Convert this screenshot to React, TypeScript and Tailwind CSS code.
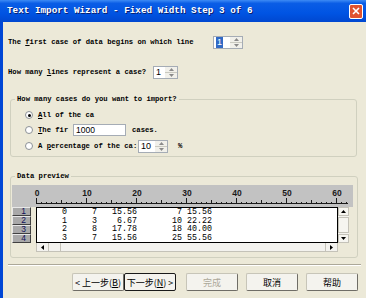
import React from 'react'

const rows = [
    ['0', '7', '15.56', '7', '15.56'],
    ['1', '3', '6.67', '10', '22.22'],
    ['2', '8', '17.78', '18', '40.00'],
    ['3', '7', '15.56', '25', '55.56'],
]

const widths = [6, 6, 8, 9, 6]

const Spinner = ({ value, width, selected }: { value: string; width: string; selected?: boolean }) => {
    return (
        <div className={`flex h-[13px] shrink-0 border border-[#a5acb5] bg-white ${width}`}>
            <div className="flex flex-1 items-center pl-[2px] font-['Liberation_Sans',sans-serif] text-[9px] leading-none font-normal text-black">
                <span className={selected ? 'bg-[#316ac5] px-[1px] py-[1px] text-white' : ''}>{value}</span>
            </div>
            <div className="flex w-[12px] flex-col">
                <div className="flex flex-1 items-center justify-center border-b border-[#c9c9c0] bg-[#f1f0ea]">
                    <svg width="5" height="3" viewBox="0 0 5 3">
                        <path d="M0 3 L2.5 0 L5 3 Z" fill="#8a8a8a" />
                    </svg>
                </div>
                <div className="flex flex-1 items-center justify-center bg-[#f1f0ea]">
                    <svg width="5" height="3" viewBox="0 0 5 3">
                        <path d="M0 0 L2.5 3 L5 0 Z" fill="#8a8a8a" />
                    </svg>
                </div>
            </div>
        </div>
    )
}

const Radio = ({ checked }: { checked?: boolean }) => {
    return (
        <div className="flex h-[8px] w-[8px] shrink-0 items-center justify-center rounded-full border border-[#8c9196] bg-white">
            {checked && <div className="h-[3px] w-[3px] rounded-full bg-black" />}
        </div>
    )
}

const Ruler = () => {
    const ticks = []
    for (let c = 0; c <= 62; c++) {
        const x = 24.5 + c * 5
        const h = c % 10 === 0 ? 5 : c % 5 === 0 ? 3 : 1
        ticks.push(<line key={c} x1={x} x2={x} y1={18 - h} y2={18.5} stroke="#1a1a1a" strokeWidth="1" />)
    }
    const labels = [0, 10, 20, 30, 40, 50, 60]
    return (
        <svg width="341" height="22" viewBox="0 0 341 22">
            <line x1="24" x2="336" y1="18.5" y2="18.5" stroke="#1a1a1a" strokeWidth="1" />
            {ticks}
            {labels.map((c) => (
                <text
                    key={c}
                    x={25 + c * 5}
                    y="11"
                    textAnchor="middle"
                    fontSize="8.5"
                    fontFamily="Liberation Sans, sans-serif"
                    fill="#1a1a1a"
                >
                    {c}
                </text>
            ))}
        </svg>
    )
}

const Button = ({ children, primary, disabled }: { children: React.ReactNode; primary?: boolean; disabled?: boolean }) => {
    return (
        <div
            className={`flex h-[18px] w-[52px] items-center justify-center rounded-[2px] border bg-[#f4f3ee] font-['Noto_Sans_CJK_SC',sans-serif] text-[9px] leading-none ${
                primary ? 'border-[#1a1a1a]' : 'border-[#c7c5b8] border-r-[#6f6d66] border-b-[#6f6d66]'
            } ${disabled ? 'text-[#aca899]' : 'text-black'}`}
        >
            {children}
        </div>
    )
}

export default function App() {
    return (
        <div className="flex h-[298px] w-[366px] flex-col overflow-hidden bg-[#ece9d8]">
            {/* title bar */}
            <div className="flex h-[22px] shrink-0 items-center justify-between bg-[linear-gradient(to_bottom,#3d8bf5_0%,#0a5de6_15%,#0054e3_60%,#0047d0_100%)] pl-[7px] pr-[3px]">
                <span className="font-['Liberation_Mono',monospace] text-[9.3px] font-bold text-white [text-shadow:1px_1px_0_#0a1e6e]">
                    Text Import Wizard - Fixed Width Step 3 of 6
                </span>
                <div className="flex h-[15px] w-[14px] items-center justify-center rounded-[2px] border border-white bg-[#e0522f]">
                    <svg width="8" height="8" viewBox="0 0 8 8">
                        <path d="M1 1 L7 7 M7 1 L1 7" stroke="#fff" strokeWidth="1.6" />
                    </svg>
                </div>
            </div>

            <div className="flex flex-1 border-l-[3px] border-[#0046d5]">
                <div className="flex flex-1 flex-col pl-[5px] font-['Liberation_Mono',monospace] text-[7.2px] font-semibold whitespace-nowrap text-black">
                    {/* line 1 */}
                    <div className="mt-[14px] flex h-[13px] items-center">
                        <span className="w-[205px]">
                            The <span className="underline">f</span>irst case of data begins on which line
                        </span>
                        <Spinner value="1" width="w-[30px]" selected />
                    </div>

                    {/* line 2 */}
                    <div className="mt-[17px] flex h-[12px] items-center">
                        <span className="w-[145px]">
                            How many <span className="underline">l</span>ines represent a case?
                        </span>
                        <Spinner value="1" width="w-[25px]" />
                    </div>

                    {/* group 1 */}
                    <fieldset className="mt-[16px] mr-[9px] ml-[2px] rounded-[3px] border border-[#d0d0bf] pb-[4px]">
                        <legend className="ml-[4px] px-[2px] leading-[10px]">How many cases do you want to import?</legend>
                        <div className="flex flex-col pl-[14px]">
                            <div className="mt-[5px] flex h-[12px] items-center">
                                <Radio checked />
                                <span className="ml-[5px]">
                                    <span className="underline">A</span>ll of the ca
                                </span>
                            </div>
                            <div className="mt-[3px] flex h-[12px] items-center">
                                <Radio />
                                <span className="ml-[5px] w-[35px]">
                                    <span className="underline">T</span>he fir
                                </span>
                                <div className="flex h-[12px] w-[53px] items-center border border-[#a5acb5] bg-white pl-[2px] font-['Liberation_Sans',sans-serif] text-[8.5px] font-normal">
                                    1000
                                </div>
                                <span className="ml-[6px]">cases.</span>
                            </div>
                            <div className="mt-[4px] flex h-[12px] items-center">
                                <Radio />
                                <span className="ml-[5px] w-[100px]">
                                    A <span className="underline">p</span>ercentage of the ca:
                                </span>
                                <Spinner value="10" width="w-[30px]" />
                                <span className="ml-[10px]">%</span>
                            </div>
                        </div>
                    </fieldset>

                    {/* group 2 */}
                    <fieldset className="mt-[14px] mr-[8px] ml-[2px] rounded-[3px] border border-[#d0d0bf] pb-[5px]">
                        <legend className="ml-[4px] px-[2px] leading-[10px]">Data preview</legend>
                        <div className="flex flex-col pl-[1px]">
                            <div className="mt-[4px] w-[341px] bg-[#c2c2c2]">
                                <Ruler />
                            </div>
                            <div className="flex">
                                <div className="flex w-[19px] flex-col">
                                    {rows.map((_, i) => (
                                        <div
                                            key={i}
                                            className="flex h-[9px] items-center justify-end border border-t-[#e8e8e8] border-r-[#404040] border-b-[#404040] border-l-[#e8e8e8] bg-[#a9a9a9] pr-[4px] font-['Liberation_Sans',sans-serif] text-[8.5px] leading-none font-normal text-[#10105a]"
                                        >
                                            {i + 1}
                                        </div>
                                    ))}
                                </div>
                                <div className="ml-[5px] flex flex-col">
                                    <div className="flex">
                                        <div className="h-[36px] w-[302px] border border-black bg-white font-['Liberation_Mono',monospace] text-[8.33px] leading-[8.5px] font-normal whitespace-pre text-black">
                                            {rows.map((r, i) => (
                                                <div key={i}>{r.map((v, j) => v.padStart(widths[j])).join('')}</div>
                                            ))}
                                        </div>
                                        <div className="flex h-[36px] w-[11px] flex-col bg-[#f3f2ee]">
                                            <div className="flex h-[9px] items-center justify-center border border-[#c4c2b8] bg-[#f6f5f0]">
                                                <svg width="5" height="3" viewBox="0 0 5 3">
                                                    <path d="M0 3 L2.5 0 L5 3 Z" fill="#000" />
                                                </svg>
                                            </div>
                                            <div className="mt-[1px] h-[16px] border border-[#c4c2b8] bg-[#f6f5f0]" />
                                            <div className="mt-auto flex h-[9px] items-center justify-center border border-[#c4c2b8] bg-[#f6f5f0]">
                                                <svg width="5" height="3" viewBox="0 0 5 3">
                                                    <path d="M0 0 L2.5 3 L5 0 Z" fill="#000" />
                                                </svg>
                                            </div>
                                        </div>
                                    </div>
                                    <div className="flex h-[9px] w-[302px] border border-t-0 border-[#c4c2b8] bg-[#f3f2ee]">
                                        <div className="flex w-[12px] items-center justify-center border-r border-[#c4c2b8]">
                                            <svg width="3" height="5" viewBox="0 0 3 5">
                                                <path d="M3 0 L0 2.5 L3 5 Z" fill="#000" />
                                            </svg>
                                        </div>
                                        <div className="w-[12px] border-r border-[#c4c2b8]" />
                                        <div className="ml-auto flex w-[12px] items-center justify-center border-l border-[#c4c2b8]">
                                            <svg width="3" height="5" viewBox="0 0 3 5">
                                                <path d="M0 0 L3 2.5 L0 5 Z" fill="#000" />
                                            </svg>
                                        </div>
                                    </div>
                                </div>
                            </div>
                        </div>
                    </fieldset>

                    {/* separator */}
                    <div className="mt-[6px] mr-[5px] h-[2px] border-t border-b border-t-[#aca899] border-b-white" />

                    {/* buttons */}
                    <div className="mt-[7px] flex items-center justify-end pr-[8px] font-normal">
                        <Button>
                            &lt; 上一步(<span className="underline">B</span>)
                        </Button>
                        <Button primary>
                            下一步(<span className="underline">N</span>) &gt;
                        </Button>
                        <div className="ml-[10px]">
                            <Button disabled>完成</Button>
                        </div>
                        <div className="ml-[8px]">
                            <Button>取消</Button>
                        </div>
                        <div className="ml-[8px]">
                            <Button>帮助</Button>
                        </div>
                    </div>
                </div>
            </div>
        </div>
    )
}
